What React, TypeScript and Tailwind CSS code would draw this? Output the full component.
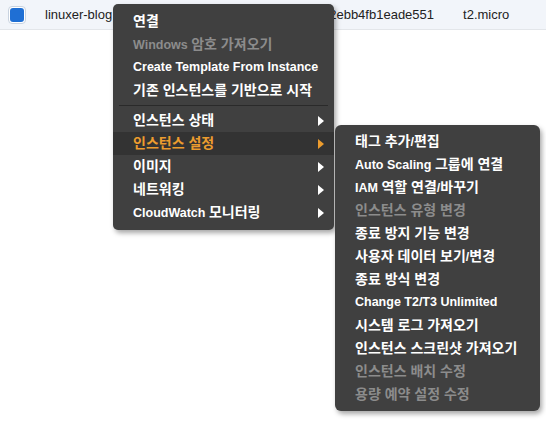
const font = { fontFamily: '"Liberation Sans", Arial, "Noto Sans CJK KR", sans-serif' };

type Item = { label: string; disabled?: boolean; sub?: boolean; active?: boolean };

const mainTop: Item[] = [
  { label: "연결" },
  { label: "Windows 암호 가져오기", disabled: true },
  { label: "Create Template From Instance" },
  { label: "기존 인스턴스를 기반으로 시작" },
];

const mainBottom: Item[] = [
  { label: "인스턴스 상태", sub: true },
  { label: "인스턴스 설정", sub: true, active: true },
  { label: "이미지", sub: true },
  { label: "네트워킹", sub: true },
  { label: "CloudWatch 모니터링", sub: true },
];

const subItems: Item[] = [
  { label: "태그 추가/편집" },
  { label: "Auto Scaling 그룹에 연결" },
  { label: "IAM 역할 연결/바꾸기" },
  { label: "인스턴스 유형 변경", disabled: true },
  { label: "종료 방지 기능 변경" },
  { label: "사용자 데이터 보기/변경" },
  { label: "종료 방식 변경" },
  { label: "Change T2/T3 Unlimited" },
  { label: "시스템 로그 가져오기" },
  { label: "인스턴스 스크린샷 가져오기" },
  { label: "인스턴스 배치 수정", disabled: true },
  { label: "용량 예약 설정 수정", disabled: true },
];

// hangul runs are set a bit larger, like Malgun Gothic next to Arial
function Label({ text }: { text: string }) {
  const parts = text.split(/([\uAC00-\uD7A3]+(?: [\uAC00-\uD7A3]+)*)/).filter(Boolean);
  return (
    <span className="whitespace-nowrap">
      {parts.map((p, i) =>
        /[\uAC00-\uD7A3]/.test(p) ? (
          <span key={i} className="text-[14px]">{p}</span>
        ) : (
          <span key={i}>{p}</span>
        )
      )}
    </span>
  );
}

function MenuRow({ item }: { item: Item }) {
  const color = item.disabled ? "text-[#8c8c8c]" : item.active ? "text-[#ec9c2e]" : "text-white";
  return (
    <div className={`flex h-[23px] items-center justify-between pl-[20px] pr-[10px] text-[12.5px] font-bold leading-none ${color} ${item.active ? "bg-[#333333]" : ""}`}>
      <Label text={item.label} />
      {item.sub && (
        <svg width="6" height="10" viewBox="0 0 6 10" className="mt-px">
          <path d="M0 0 L6 5 L0 10 Z" fill={item.active ? "#ec9c2e" : "#ffffff"} />
        </svg>
      )}
    </div>
  );
}

export default function App() {
  return (
    <div className="relative h-[421px] w-[546px] overflow-hidden bg-white" style={font}>
      <div className="flex h-[30px] items-center border-b border-[#e3e6ea] bg-[#f2f5fa] text-[13px] text-[#222]">
        <div className="ml-[8px] flex h-[18px] w-[18px] items-center justify-center rounded-[4px] border border-[#c9d3e0] bg-white">
          <div className="h-[14px] w-[14px] rounded-[3px] bg-[#1f6fd4]" />
        </div>
        <span className="ml-[19px]">linuxer-blog</span>
        <span className="ml-[217px]">2ebb4fb1eade551</span>
        <span className="ml-[29px]">t2.micro</span>
      </div>

      <div className="absolute left-[113px] top-[4px] w-[221px] rounded-[5px] bg-[#404040] pb-[6px] pt-[6px] shadow-[2px_3px_5px_rgba(0,0,0,0.35)]">
        {mainTop.map((it) => (
          <MenuRow key={it.label} item={it} />
        ))}
        <div className="mx-[6px] my-[3px] border-t border-[#2a2a2a]" />
        {mainBottom.map((it) => (
          <MenuRow key={it.label} item={it} />
        ))}
      </div>

      <div className="absolute left-[335px] top-[125px] w-[205px] rounded-[6px] bg-[#404040] pb-[5px] pt-[5px] shadow-[2px_3px_5px_rgba(0,0,0,0.35)]">
        {subItems.map((it) => (
          <MenuRow key={it.label} item={it} />
        ))}
      </div>
    </div>
  );
}
